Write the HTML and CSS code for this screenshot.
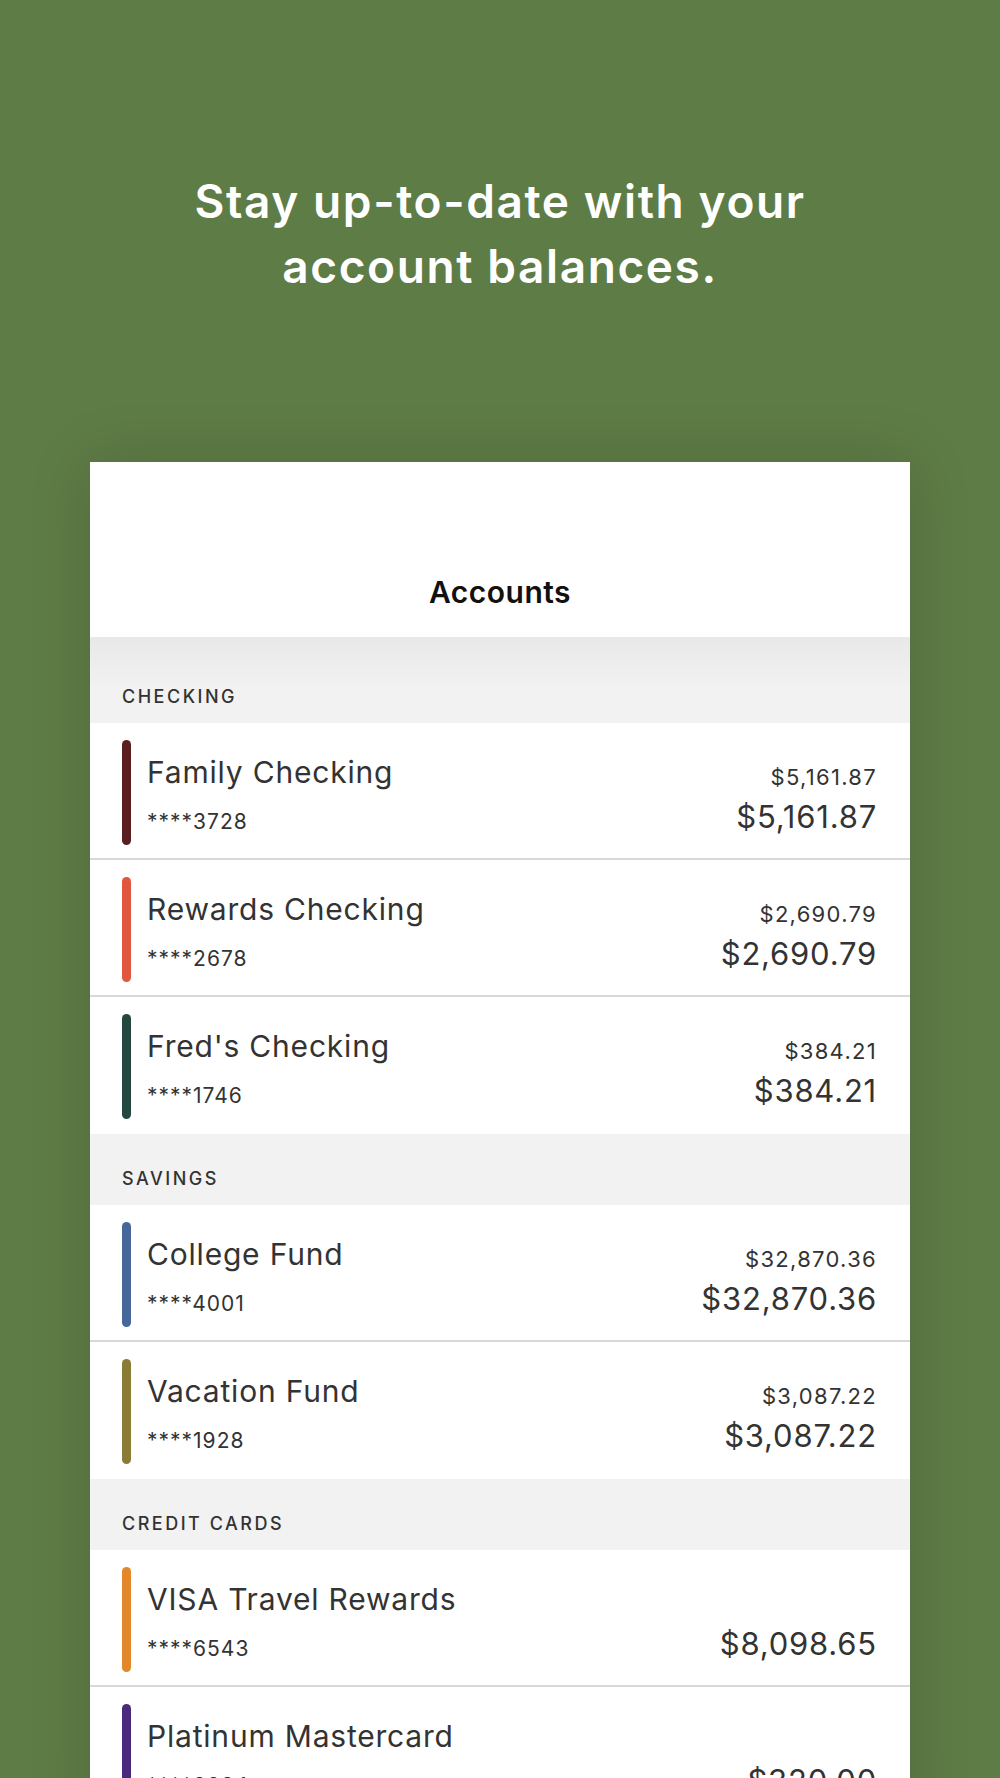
FILE: index.html
```html
<!DOCTYPE html>
<html lang="en">
<head>
<meta charset="utf-8">
<title>Accounts</title>
<link rel="stylesheet" href="styles.css">
</head>
<body>
<div class="page">
  <h1 class="headline">Stay up-to-date with your<br>account balances.</h1>
  <div class="card">
    <div class="nav"><span class="nav-title">Accounts</span></div>

    <div class="section section-first"><span>Checking</span></div>
    <div class="row">
      <div class="bar bar-family"></div>
      <div class="info"><div class="name">Family Checking</div><div class="num">****3728</div></div>
      <div class="amounts"><div class="small">$5,161.87</div><div class="big">$5,161.87</div></div>
    </div>
    <div class="row">
      <div class="bar bar-rewards"></div>
      <div class="info"><div class="name">Rewards Checking</div><div class="num">****2678</div></div>
      <div class="amounts"><div class="small">$2,690.79</div><div class="big">$2,690.79</div></div>
    </div>
    <div class="row row-last">
      <div class="bar bar-fred"></div>
      <div class="info"><div class="name">Fred's Checking</div><div class="num">****1746</div></div>
      <div class="amounts"><div class="small">$384.21</div><div class="big">$384.21</div></div>
    </div>

    <div class="section"><span>Savings</span></div>
    <div class="row">
      <div class="bar bar-college"></div>
      <div class="info"><div class="name">College Fund</div><div class="num">****4001</div></div>
      <div class="amounts"><div class="small">$32,870.36</div><div class="big">$32,870.36</div></div>
    </div>
    <div class="row row-last">
      <div class="bar bar-vacation"></div>
      <div class="info"><div class="name">Vacation Fund</div><div class="num">****1928</div></div>
      <div class="amounts"><div class="small">$3,087.22</div><div class="big">$3,087.22</div></div>
    </div>

    <div class="section"><span>Credit Cards</span></div>
    <div class="row">
      <div class="bar bar-visa"></div>
      <div class="info"><div class="name">VISA Travel Rewards</div><div class="num">****6543</div></div>
      <div class="amounts"><div class="big">$8,098.65</div></div>
    </div>
    <div class="row row-last">
      <div class="bar bar-platinum"></div>
      <div class="info"><div class="name">Platinum Mastercard</div><div class="num">****8824</div></div>
      <div class="amounts"><div class="big">$320.00</div></div>
    </div>
  </div>
</div>
</body>
</html>
```

FILE: styles.css
```css
html, body {
  margin: 0;
  padding: 0;
  height: 1778px;
  overflow: hidden;
  background: #5e7c46;
}

.page {
  width: 1000px;
  height: 1778px;
  overflow: hidden;
  font-family: Inter, "Liberation Sans", sans-serif;
  color: #333;
}

.headline {
  margin: 0;
  padding-top: 169px;
  font-size: 46px;
  line-height: 65px;
  font-weight: 600;
  color: #ffffff;
  text-align: center;
  letter-spacing: 1.6px;
}

.card {
  width: 820px;
  margin: 163px auto 0;
  background: #ffffff;
  box-shadow: 0 0 60px rgba(0, 0, 0, 0.14);
}

.nav {
  height: 175px;
  box-sizing: border-box;
  display: flex;
  align-items: flex-end;
  justify-content: center;
  padding-bottom: 25px;
}

.nav-title {
  font-size: 30px;
  line-height: 40px;
  font-weight: 600;
  letter-spacing: 0.5px;
  color: #111;
}

.section {
  height: 71px;
  box-sizing: border-box;
  background: #f2f2f2;
  display: flex;
  align-items: flex-end;
  padding: 0 32px 14px;
}

.section-first {
  height: 86px;
  background: linear-gradient(#e8e8e8, #f2f2f2 60%);
}

.section span {
  font-size: 18px;
  line-height: 24px;
  font-weight: 500;
  letter-spacing: 2.5px;
  text-transform: uppercase;
  color: #333;
}

.row {
  height: 137px;
  box-sizing: border-box;
  display: flex;
  padding: 17px 33px 13px 32px;
  border-bottom: 2px solid #d8d8d8;
}

.row-last {
  border-bottom: 0;
  padding-bottom: 15px;
}

.bar {
  width: 9px;
  border-radius: 5px;
  flex-shrink: 0;
}

.bar-family { background: #5a1e1e; }
.bar-rewards { background: #e0573d; }
.bar-fred { background: #24473f; }
.bar-college { background: #47679a; }
.bar-vacation { background: #8a7c35; }
.bar-visa { background: #e2882a; }
.bar-platinum { background: #4a2a7a; }

.info {
  margin-left: 16px;
  flex: 1;
  padding-top: 12px;
}

.name {
  font-size: 30px;
  line-height: 40px;
  letter-spacing: 0.8px;
  color: #333;
}

.num {
  margin-top: 15px;
  font-size: 21px;
  line-height: 30px;
  letter-spacing: 1px;
  color: #333;
}

.amounts {
  display: flex;
  flex-direction: column;
  justify-content: flex-end;
  align-items: flex-end;
  padding-bottom: 8px;
}

.small {
  font-size: 22px;
  line-height: 30px;
  margin-bottom: 5px;
  letter-spacing: 1.3px;
  color: #333;
}

.big {
  font-size: 31px;
  line-height: 40px;
  letter-spacing: 0.8px;
  color: #333;
}
```
